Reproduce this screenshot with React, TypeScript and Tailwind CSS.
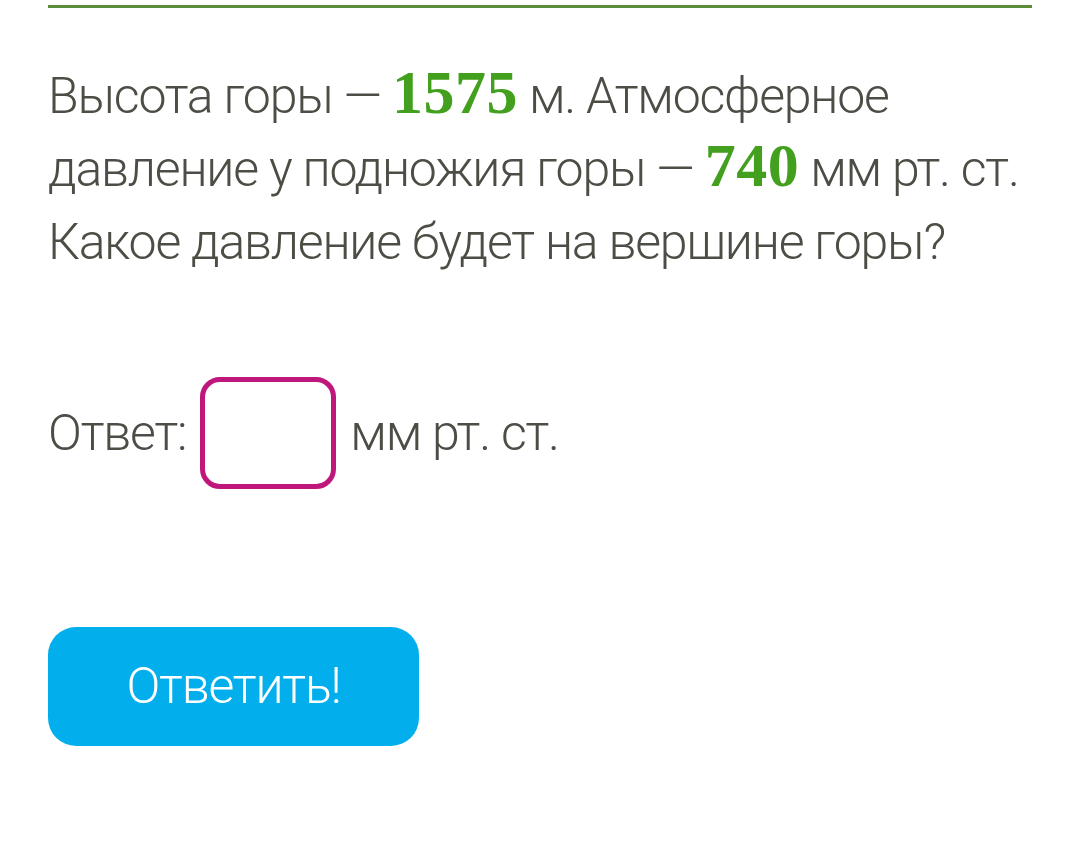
import React from 'react';

function Num({ children }: { children: React.ReactNode }) {
  return (
    <span className="font-['Liberation_Serif',serif] text-[62px] leading-none font-bold tracking-[0.5px] text-[#43a01f]">
      {children}
    </span>
  );
}

export default function App() {
  return (
    <div className="min-h-[860px] w-[1080px] bg-white font-['Roboto',sans-serif] font-light text-[#4d4d45]">
      <div className="px-12 pt-[5px]">
        <div className="h-[3px] w-[984px] bg-[#5b8d3b]" />

        <div className="mt-[52px] whitespace-nowrap text-[50px] leading-[73px] tracking-[-1.2px]">
          <p>
            Высота горы — <Num>1575</Num> м. Атмосферное
          </p>
          <p>
            давление у подножия горы — <Num>740</Num> мм рт. ст.
          </p>
          <p>Какое давление будет на вершине горы?</p>
        </div>

        <div className="mt-[98px] flex items-center gap-[14px] text-[50px] tracking-[-1.2px]">
          <span>Ответ:</span>
          <div className="h-[112px] w-[136px] rounded-[20px] border-[5px] border-[#c0177c]" />
          <span>мм рт. ст.</span>
        </div>

        <button className="mt-[138px] flex h-[119px] w-[371px] items-center justify-center rounded-[28px] bg-[#03aeec] text-[50px] font-light tracking-[-1.2px] text-white">
          Ответить!
        </button>
      </div>
    </div>
  );
}
